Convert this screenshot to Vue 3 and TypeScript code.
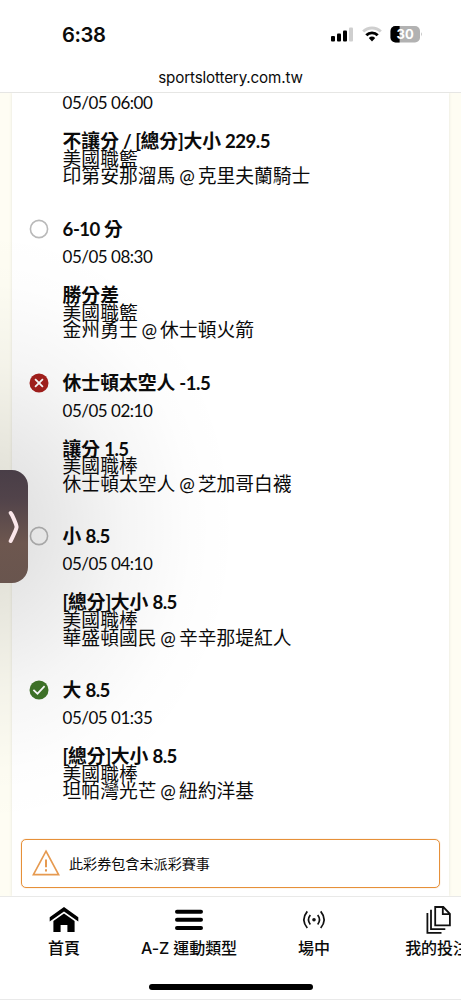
<script setup lang="ts">
import { h, type FunctionalComponent } from 'vue'

type Status = 'pending' | 'lost' | 'won' | 'hidden'

interface Bet {
  pick: string
  time: string
  market: string
  league: string
  teams: string
  status: Status
}

const bets: Bet[] = [
  { pick: '', time: '05/05 06:00', market: '不讓分 / [總分]大小 229.5', league: '美國職籃', teams: '印第安那溜馬 @ 克里夫蘭騎士', status: 'hidden' },
  { pick: '6-10 分', time: '05/05 08:30', market: '勝分差', league: '美國職籃', teams: '金州勇士 @ 休士頓火箭', status: 'pending' },
  { pick: '休士頓太空人 -1.5', time: '05/05 02:10', market: '讓分 1.5', league: '美國職棒', teams: '休士頓太空人 @ 芝加哥白襪', status: 'lost' },
  { pick: '小 8.5', time: '05/05 04:10', market: '[總分]大小 8.5', league: '美國職棒', teams: '華盛頓國民 @ 辛辛那堤紅人', status: 'pending' },
  { pick: '大 8.5', time: '05/05 01:35', market: '[總分]大小 8.5', league: '美國職棒', teams: '坦帕灣光芒 @ 紐約洋基', status: 'won' },
]

// Sets Latin runs slightly tighter than the Chinese text around them.
const Mixed: FunctionalComponent<{ text: string }> = (props) =>
  h(
    'span',
    props.text
      .split(/([\u4e00-\u9fff]+)/)
      .filter(Boolean)
      .map((run) => (/[\u4e00-\u9fff]/.test(run) ? run : h('span', { class: 'latin' }, run))),
  )
Mixed.props = ['text']
</script>

<template>
  <div class="screen">
    <header class="top">
      <div class="status-bar">
        <span class="clock">6:38</span>
        <svg class="indicators" width="96" height="20" viewBox="0 0 96 20">
          <rect x="1" y="12" width="4" height="5.5" rx="1" />
          <rect x="7" y="9.5" width="4" height="8" rx="1" />
          <rect x="13" y="6.5" width="4" height="11" rx="1" />
          <rect x="19" y="3.5" width="4" height="14" rx="1" fill="#cfcfcf" />
          <g fill="none" stroke-width="2.9">
            <path d="M33.2 7.6A12.4 12.4 0 0 1 50.8 7.6" stroke="#cfcfcf" />
            <path d="M36.3 11.2A8.1 8.1 0 0 1 47.7 11.2" stroke="#000" />
          </g>
          <path d="M38.8 13.9Q42 11.3 45.2 13.9L42 17.4Z" />
          <clipPath id="cell"><rect x="60.5" y="2" width="29.5" height="16.5" rx="5" /></clipPath>
          <g clip-path="url(#cell)">
            <rect x="60" y="1" width="31" height="18" fill="#b2b2b2" />
            <rect x="60" y="1" width="9.6" height="18" />
          </g>
          <path d="M91 8Q92.8 10.2 91 12.5Z" fill="#b2b2b2" />
          <text x="75.2" y="15" text-anchor="middle" class="level">30</text>
        </svg>
      </div>
      <div class="address">sportslottery.com.tw</div>
    </header>

    <main class="page">
      <section class="card">
        <article v-for="(bet, i) in bets" :key="i" class="bet">
          <div v-if="bet.status !== 'hidden'" class="pick">
            <svg class="mark" width="20" height="20" viewBox="0 0 20 20" fill="none">
              <circle v-if="bet.status === 'pending'" cx="10" cy="10" r="8.6" stroke="#b9b9b9" stroke-width="1.6" />
              <template v-else-if="bet.status === 'lost'">
                <circle cx="10" cy="10" r="9.5" fill="#a51f1c" />
                <path d="M6.1 6.1L13.9 13.9M13.9 6.1L6.1 13.9" stroke="#fff" stroke-width="1.8" />
              </template>
              <template v-else>
                <circle cx="10" cy="10" r="9.5" fill="#3f7428" />
                <path d="M4.4 9.8L8.5 13.7L15.6 6.2" stroke="#fff" stroke-width="1.7" />
              </template>
            </svg>
            <Mixed :text="bet.pick" />
          </div>
          <div class="time">{{ bet.time }}</div>
          <div class="market"><Mixed :text="bet.market" /></div>
          <div class="line"><Mixed :text="bet.league" /></div>
          <div class="line"><Mixed :text="bet.teams" /></div>
        </article>

        <div class="notice">
          <svg width="28" height="28" viewBox="0 0 28 28" fill="none" stroke="#e69a50">
            <path d="M14 2.2L26.6 25.6H1.4Z" stroke-width="1.7" />
            <path d="M14 10.5V18.3M14 20.2V22.6" stroke-width="2" />
          </svg>
          <span>此彩券包含未派彩賽事</span>
        </div>
      </section>
      <div class="drawer-shade"></div>
      <div class="drawer">
        <svg width="12" height="34" viewBox="0 0 12 34" fill="none">
          <path d="M2.7 3L4.2 5.3Q8.6 14.8 8.6 17Q8.6 18.8 4.2 27.8L2.7 31" stroke="#fbe7ea" stroke-width="4" stroke-linecap="round" stroke-linejoin="round" />
        </svg>
      </div>
    </main>

    <nav class="tabs">
      <div class="tab">
        <svg width="30" height="28" viewBox="0 0 30 28">
          <path d="M15 1L29.3 11.3V15.6L15 5.6L.7 15.6V11.3Z" />
          <path d="M15 7.6L25.6 15V26H18.4V19H11.6V26H4.4V15Z" />
        </svg>
        <span>首頁</span>
      </div>
      <div class="tab">
        <svg width="30" height="28" viewBox="0 0 30 28" stroke="#000" stroke-width="4" stroke-linecap="round">
          <path d="M3 5.7H27M3 13.8H27M3 22H27" />
        </svg>
        <span>A-Z 運動類型</span>
      </div>
      <div class="tab">
        <svg width="30" height="28" viewBox="0 0 30 28" fill="none" stroke="#111" stroke-width="1.7">
          <circle cx="15" cy="13.7" r="1.8" fill="#111" stroke="none" />
          <path d="M11.3 9Q7.7 13.7 11.3 18.4M18.7 9Q22.3 13.7 18.7 18.4M8.3 5.4Q1.5 13.7 8.3 22M21.7 5.4Q28.5 13.7 21.7 22" />
        </svg>
        <span>場中</span>
      </div>
      <div class="tab">
        <svg width="30" height="30" viewBox="0 0 30 30" fill="none" stroke="#111" stroke-width="1.8">
          <path d="M11.2 2H19.3L25.9 8.8V20.3H11.2ZM18.8 2V9.2H25.9M7 4.8V24.2H21.3M3.4 8V27.8H17.5" />
        </svg>
        <span class="my-bets">我的投注</span>
      </div>
    </nav>
    <div class="home-indicator"></div>
  </div>
</template>

<style>
body {
  margin: 0;
  overflow: hidden;
}
</style>

<style scoped>
.screen {
  position: relative;
  display: flex;
  flex-direction: column;
  width: 461px;
  height: 1000px;
  overflow: hidden;
  box-sizing: border-box;
  border-bottom: 1px solid #e9e9e9;
  background: #fff;
  color: #0b0b0b;
  font-family: Lato, "Noto Sans CJK TC", sans-serif;
}
.top {
  height: 93px;
  flex: none;
  box-sizing: border-box;
  border-bottom: 1px solid #e6e6e4;
}
.status-bar {
  display: flex;
  justify-content: space-between;
  padding: 24px 35px 0 62px;
  height: 42px;
}
.clock {
  font: 600 20.2px/22px Inter, sans-serif;
  letter-spacing: -0.4px;
}
.indicators {
  fill: #000;
}
.level {
  fill: #fff;
  font: 700 13px Inter, sans-serif;
}
.address {
  font: 400 15.2px/22px Inter, sans-serif;
  letter-spacing: -0.15px;
  padding-top: 1px;
  text-align: center;
}
.page {
  position: relative;
  height: 803px;
  flex: none;
  overflow: hidden;
  background: #fefdf3;
}
.card {
  width: 437px;
  height: 803px;
  margin-left: 12px;
  box-sizing: border-box;
  padding: 0 9px;
  background: #fff;
  box-shadow: 0 0 3px #e5e3d9;
  overflow: hidden;
}
.bet {
  padding: 0 0 29.8px 41.6px;
  white-space: pre;
}
.bet:first-child {
  margin-top: -4px;
}
.pick {
  display: flex;
  align-items: center;
  height: 28px;
  margin-left: -34px;
  gap: 14px;
  font-size: 18.8px;
  font-weight: 700;
  line-height: 28px;
}
.mark {
  flex: none;
}
.time {
  height: 28px;
  margin-bottom: 15.2px;
  font-size: 17px;
  letter-spacing: -0.5px;
  line-height: 28px;
}
.market,
.line {
  height: 17.6px;
  font-size: 18.8px;
  line-height: 17.6px;
}
.market {
  font-weight: 700;
}
.bet :deep(.latin) {
  font-size: 18.6px;
  letter-spacing: -0.5px;
  line-height: 0;
}
.notice {
  display: flex;
  align-items: center;
  width: 419px;
  height: 49px;
  box-sizing: border-box;
  margin-top: 9px;
  padding-left: 10px;
  gap: 9px;
  border: 1px solid #e69039;
  box-shadow: 0 0 1px #e9a562;
  border-radius: 5px;
  font-size: 14.1px;
}
.line :deep(.latin) {
  letter-spacing: -0.9px;
}
.drawer-shade {
  position: absolute;
  inset: 0;
  background: radial-gradient(ellipse 255px 300px at -15px 434px, rgba(0, 0, 0, 0.14), rgba(0, 0, 0, 0.095) 25%, rgba(0, 0, 0, 0.038) 55%, rgba(0, 0, 0, 0.008) 82%, transparent);
}
.drawer {
  position: absolute;
  top: 377px;
  left: -20px;
  display: flex;
  align-items: center;
  justify-content: flex-end;
  width: 48px;
  height: 113px;
  box-sizing: border-box;
  padding-right: 8px;
  border-radius: 0 16px 16px 0;
  background: linear-gradient(#493e47, #51434a 25%, #6d574f 65%, #69554e);
}
.tabs {
  display: grid;
  grid-template-columns: repeat(4, 125px);
  flex: none;
  height: 79px;
  box-sizing: border-box;
  padding-top: 8px;
  padding-left: 1.5px;
  border-top: 1px solid #e9e9e8;
  background: #fff;
  z-index: 1;
}
.tab {
  display: flex;
  flex-direction: column;
  align-items: center;
  font: 500 16px/24px Inter, "Noto Sans CJK TC", sans-serif;
  letter-spacing: -0.1px;
  white-space: nowrap;
}
.tab svg {
  height: 30px;
  margin-bottom: 1px;
  flex: none;
}
.my-bets {
  margin-right: 4px;
}
.home-indicator {
  width: 164px;
  height: 6px;
  margin: 9px 0 0 149px;
  border-radius: 3px;
  background: #000;
}
</style>
